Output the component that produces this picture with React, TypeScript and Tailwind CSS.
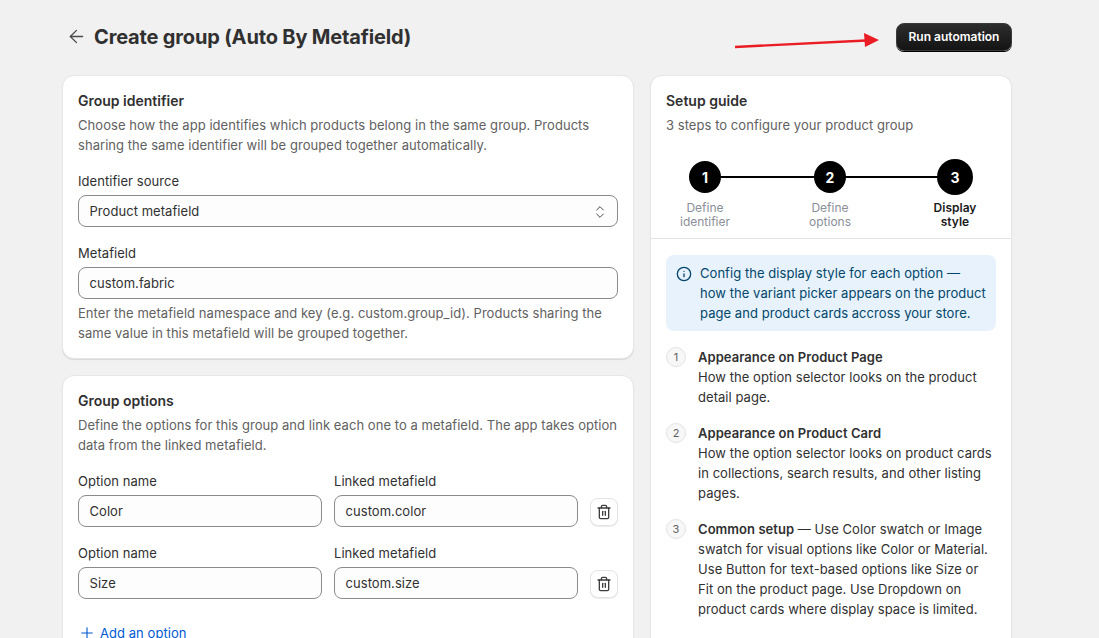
import React from "react";
import { ArrowLeft, ChevronsUpDown, Info, Plus, Trash2 } from "lucide-react";

function Field({ label, value, className = "" }: { label: string; value: string; className?: string }) {
  return (
    <div className={className}>
      <div className="text-[13px] leading-5 text-[#303030] mb-1 tracking-[0.05px]">{label}</div>
      <div className="h-8 rounded-lg border border-[#8a8a8a] bg-[#fdfdfd] px-[10.5px] pt-px flex items-center text-[13px] tracking-[0.05px] text-[#303030]">{value}</div>
    </div>
  );
}

function OptionRow({ name, meta }: { name: string; meta: string }) {
  return (
    <div className="flex items-end gap-3">
      <Field label="Option name" value={name} className="flex-1" />
      <Field label="Linked metafield" value={meta} className="flex-1" />
      <button className="w-7 h-7 mb-[1px] rounded-lg border border-[#e3e3e3] bg-white flex items-center justify-center text-[#3f3f3f] shadow-[0_1px_1px_rgba(0,0,0,0.08)]">
        <Trash2 size={16} strokeWidth={2} />
      </button>
    </div>
  );
}

function Card({ children, className = "" }: { children: React.ReactNode; className?: string }) {
  return (
    <section className={"rounded-xl bg-white border border-[#e6e6e6] shadow-[0_1px_1px_rgba(0,0,0,0.1)] " + className}>{children}</section>
  );
}

function Step({ n, line1, line2, active }: { n: number; line1: string; line2: string; active?: boolean }) {
  return (
    <div className="w-20 flex flex-col items-center">
      <div className="relative h-9 flex items-center justify-center">
        <div className={(active ? "w-9 h-9" : "w-8 h-8") + " rounded-full bg-black text-white font-bold text-[14px] flex items-center justify-center"}>{n}</div>
      </div>
      <div className={"mt-[6px] text-center text-[12px] leading-[14px] " + (active ? "font-semibold text-[#1a1a1a]" : "text-[#8a8f98]")}>
        <div>{line1}</div>
        <div>{line2}</div>
      </div>
    </div>
  );
}

function GuideItem({ n, children }: { n: number; children: React.ReactNode }) {
  return (
    <div className="flex">
      <div className="w-5 h-5 shrink-0 rounded-full border border-[#e3e3e3] bg-[#f7f7f7] text-[11px] text-[#616161] flex items-center justify-center">{n}</div>
      <div className="ml-3 text-[13px] leading-5 tracking-[0.05px] text-[#303030]">{children}</div>
    </div>
  );
}

export default function App() {
  return (
    <div className="relative h-[638px] overflow-hidden bg-[#f1f1f1] pl-[62px] pr-[87px] font-['Inter',sans-serif] text-[#303030]">
      <header className="h-[75px] flex items-center justify-between">
        <div className="flex items-center gap-[7.5px] ml-[3.5px] -mt-[2px]">
          <ArrowLeft size={21} strokeWidth={1.5} className="text-[#4a4a4a]" />
          <h1 className="text-[20px] leading-6 font-bold tracking-[-0.16px] text-[#303030]">Create group (Auto By Metafield)</h1>
        </div>
        <button className="h-7 w-[116px] -mt-[1px] rounded-lg border border-[#3a3a3a] bg-gradient-to-b from-[#2e2e2e] to-[#141414] text-white text-[12px] font-semibold shadow-[0_1px_0_#000]">
          Run automation
        </button>
      </header>

      <svg className="absolute left-[730px] top-[30px]" width="156" height="24" viewBox="0 0 156 24">
        <line x1="5" y1="17" x2="136" y2="10.5" stroke="#ea1c24" strokeWidth="2.4" />
        <polygon points="134,3 149,10 135,17" fill="#ea1c24" />
      </svg>

      <div className="flex items-start gap-4">
        <div className="w-[572px] flex flex-col gap-4">
          <Card className="p-[15px]">
            <h2 className="text-[14px] leading-5 font-semibold">Group identifier</h2>
            <p className="mt-1 text-[13px] leading-5 tracking-[0.05px] text-[#616161]">
              Choose how the app identifies which products belong in the same group. Products sharing the same identifier will be grouped together automatically.
            </p>
            <div className="mt-4">
              <div className="text-[13px] leading-5 tracking-[0.05px] mb-1">Identifier source</div>
              <div className="h-8 rounded-lg border border-[#8a8a8a] bg-[#fdfdfd] pl-[10.5px] pr-[9px] pt-px flex items-center justify-between text-[13px] tracking-[0.05px]">
                <span>Product metafield</span>
                <ChevronsUpDown size={16} strokeWidth={1.5} className="text-[#4a4a4a]" />
              </div>
            </div>
            <Field label="Metafield" value="custom.fabric" className="mt-4" />
            <p className="mt-1 text-[13px] leading-5 tracking-[0.05px] text-[#616161]">
              Enter the metafield namespace and key (e.g. custom.group_id). Products sharing the same value in this metafield will be grouped together.
            </p>
          </Card>

          <Card className="p-[15px]">
            <h2 className="text-[14px] leading-5 font-semibold">Group options</h2>
            <p className="mt-1 text-[13px] leading-5 tracking-[0.05px] text-[#616161]">
              Define the options for this group and link each one to a metafield. The app takes option data from the linked metafield.
            </p>
            <div className="mt-4 flex flex-col gap-4">
              <OptionRow name="Color" meta="custom.color" />
              <OptionRow name="Size" meta="custom.size" />
            </div>
            <button className="mt-6 flex items-center gap-1 text-[13px] leading-5 tracking-[0.05px] text-[#005bd3]">
              <Plus size={18} strokeWidth={1.5} />
              Add an option
            </button>
          </Card>
        </div>

        <Card className="w-[362px]">
          <div className="px-[15px] pt-[15px]">
            <h2 className="text-[14px] leading-5 font-semibold">Setup guide</h2>
            <p className="mt-1 text-[13px] leading-5 tracking-[0.05px] text-[#616161]">3 steps to configure your product group</p>
          </div>
          <div className="relative mt-6 pl-[14px] pr-4 pb-[9px] border-b border-[#e3e3e3] flex justify-between">
            <div className="absolute left-[54px] right-[56px] top-[17px] h-[2px] bg-black" />
            <Step n={1} line1="Define" line2="identifier" />
            <Step n={2} line1="Define" line2="options" />
            <Step n={3} line1="Display" line2="style" active />
          </div>
          <div className="px-[15px] pt-4 pb-10">
            <div className="rounded-lg bg-[#e8f2fc] pl-[10px] pr-2 py-2 flex gap-2 text-[13px] leading-5 tracking-[0.05px] text-[#00476b]">
              <Info size={16} strokeWidth={2} className="shrink-0 mt-[3px] text-[#00476b]" />
              <span>Config the display style for each option — how the variant picker appears on the product page and product cards accross your store.</span>
            </div>
            <div className="mt-4 flex flex-col gap-4">
              <GuideItem n={1}>
                <div className="font-semibold">Appearance on Product Page</div>
                How the option selector looks on the product detail page.
              </GuideItem>
              <GuideItem n={2}>
                <div className="font-semibold">Appearance on Product Card</div>
                How the option selector looks on product cards in collections, search results, and other listing pages.
              </GuideItem>
              <GuideItem n={3}>
                <span className="font-semibold">Common setup</span> — Use Color swatch or Image swatch for visual options like Color or Material. Use Button for text-based options like Size or Fit on the product page. Use Dropdown on product cards where display space is limited.
              </GuideItem>
            </div>
          </div>
        </Card>
      </div>
    </div>
  );
}
